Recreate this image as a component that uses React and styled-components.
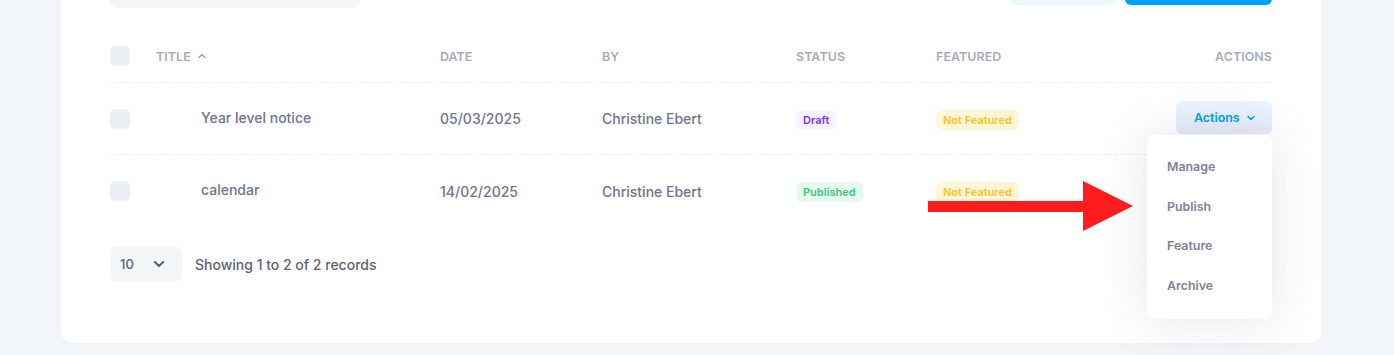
import React from "react"
import styled, { createGlobalStyle } from "styled-components"

const GlobalStyle = createGlobalStyle`
  html, body {
    margin: 0;
    padding: 0;
    background: #f3f6f9;
    font-family: Inter, "Noto Sans", sans-serif;
    overflow: hidden;
  }
`

const rows = [
  {
    title: "Year level notice",
    date: "05/03/2025",
    by: "Christine Ebert",
    status: "draft",
    open: true,
  },
  {
    title: "calendar",
    date: "14/02/2025",
    by: "Christine Ebert",
    status: "published",
  },
]

const badgeColors = {
  draft: { bg: "#f6f2ff", fg: "#7239ea", label: "Draft" },
  published: { bg: "#e6fbf0", fg: "#3fc77c", label: "Published" },
  muted: { bg: "#fff6d8", fg: "#ffc21a", label: "Not Featured" },
}

const ChevronUp = () => (
  <svg width="10" height="10" viewBox="0 0 10 10" fill="none">
    <path d="M2 6.5 L5 3.5 L8 6.5" stroke="#a1a5b7" strokeWidth="1.6" strokeLinecap="round" strokeLinejoin="round" />
  </svg>
)

const ChevronDown = ({ color = "#009ef7", size = 10 }) => (
  <svg width={size} height={size} viewBox="0 0 10 10" fill="none">
    <path d="M2 3.5 L5 6.5 L8 3.5" stroke={color} strokeWidth="1.5" strokeLinecap="round" strokeLinejoin="round" />
  </svg>
)

const Arrow = () => (
  <ArrowSvg width="206" height="52" viewBox="0 0 206 52">
    <polygon points="0,20 155,20 155,0 205,25 155,50 155,31 0,31" fill="#ff1c1c" />
  </ArrowSvg>
)

const App = () => (
  <>
    <GlobalStyle />
    <Page>
      <Card>
        {/* toolbar sits mostly above the visible area */}
        <Toolbar>
          <Search aria-label="Search notices" />
          <ToolbarButtons>
            <LightButton aria-label="Filter" />
            <PrimaryButton aria-label="Add notice" />
          </ToolbarButtons>
        </Toolbar>

        <HeadRow>
          <Checkbox />
          <HeadCell>
            Title <ChevronUp />
          </HeadCell>
          <HeadCell>Date</HeadCell>
          <HeadCell>By</HeadCell>
          <HeadCell>Status</HeadCell>
          <HeadCell>Featured</HeadCell>
          <HeadCell $right>Actions</HeadCell>
        </HeadRow>

        {rows.map((r, i) => (
          <Row key={r.title} $last={i === rows.length - 1}>
            <Checkbox />
            <TitleCell>{r.title}</TitleCell>
            <Cell>{r.date}</Cell>
            <Cell>{r.by}</Cell>
            <div>
              <Badge $kind={r.status}>{badgeColors[r.status].label}</Badge>
            </div>
            <div>
              <Badge $kind="muted">Not Featured</Badge>
            </div>
            <ActionsWrap>
              {r.open && (
                <>
                  <ActionsButton>
                    Actions <ChevronDown />
                  </ActionsButton>
                  <Menu>
                    <MenuItem>Manage</MenuItem>
                    <MenuItem>Publish</MenuItem>
                    <MenuItem>Feature</MenuItem>
                    <MenuItem>Archive</MenuItem>
                  </Menu>
                </>
              )}
            </ActionsWrap>
          </Row>
        ))}

        <Footer>
          <PageSize>
            10 <ChevronDown color="#5e6278" size={14} />
          </PageSize>
          <Showing>Showing 1 to 2 of 2 records</Showing>
        </Footer>

        <Arrow />
      </Card>
    </Page>
  </>
)

export default App

const Page = styled.div`
  padding: 0 73px 12px 61px;
`

const Card = styled.div`
  position: relative;
  margin-top: -66px;
  background: #fff;
  border-radius: 12px;
  padding: 30px 49px 62px;
  box-shadow: 0 0 20px rgba(76, 87, 125, 0.02);
`

const Toolbar = styled.div`
  display: flex;
  align-items: center;
  justify-content: space-between;
  height: 44px;
  margin-bottom: 22px;
`

const Search = styled.input`
  width: 250px;
  height: 44px;
  box-sizing: border-box;
  border: none;
  border-radius: 8px;
  background: #f3f6f9;
  padding: 0 16px;
  font-family: inherit;
`

const ToolbarButtons = styled.div`
  display: flex;
  gap: 10px;
`

const LightButton = styled.button`
  width: 105px;
  height: 38px;
  border: none;
  border-radius: 6px;
  background: #eef7fe;
`

const PrimaryButton = styled(LightButton)`
  width: 147px;
  background: #009ef7;
`

const grid = `
  display: grid;
  grid-template-columns: 46px 284px 162px 194px 140px 1fr auto;
  align-items: center;
  box-sizing: border-box;
`

const HeadRow = styled.div`
  ${grid}
  height: 53px;
  border-bottom: 1px dashed #eceef3;
`

const HeadCell = styled.div`
  display: flex;
  align-items: center;
  gap: 6px;
  justify-content: ${(p) => (p.$right ? "flex-end" : "flex-start")};
  font-size: 12.4px;
  font-weight: 600;
  color: #a9abbd;
  text-transform: uppercase;
  letter-spacing: 0.1px;
`

const Row = styled.div`
  ${grid}
  height: 72px;
  border-bottom: ${(p) => (p.$last ? "none" : "1px dashed #eceef3")};
`

const Checkbox = styled.span`
  display: block;
  width: 20px;
  height: 20px;
  border-radius: 5px;
  background: #eceff3;
`

const Cell = styled.div`
  font-size: 14px;
  font-weight: 500;
  color: #6f7390;
`

const TitleCell = styled(Cell)`
  padding-left: 45px;
  margin-top: -3px;
`

const Badge = styled.span`
  display: inline-block;
  padding: 3px 7px;
  border-radius: 6px;
  font-size: 11px;
  font-weight: 600;
  line-height: 14px;
  background: ${(p) => badgeColors[p.$kind].bg};
  color: ${(p) => badgeColors[p.$kind].fg};
`

const ActionsWrap = styled.div`
  position: relative;
  display: flex;
  justify-content: flex-end;
`

const ActionsButton = styled.button`
  display: flex;
  align-items: center;
  gap: 6px;
  width: 96px;
  height: 33px;
  padding: 0 0 0 18px;
  border: none;
  border-radius: 6px;
  background: linear-gradient(180deg, #ebf6fe 0%, #e3ecf8 100%);
  color: #009ef7;
  font-family: inherit;
  font-size: 12.4px;
  font-weight: 600;
  margin-top: -2px;
`

const Menu = styled.div`
  position: absolute;
  top: 32px;
  right: 0;
  width: 125px;
  padding: 12px 0 14px;
  background: #fff;
  border-radius: 6px;
  box-shadow: 0 0 50px 0 rgba(82, 63, 105, 0.15);
  z-index: 2;
`

const MenuItem = styled.div`
  height: 39.5px;
  display: flex;
  align-items: center;
  padding-left: 20px;
  font-size: 12.4px;
  font-weight: 600;
  color: #7e8299;
`

const Footer = styled.div`
  display: flex;
  align-items: center;
  gap: 13px;
  margin-top: 20px;
`

const PageSize = styled.div`
  display: flex;
  align-items: center;
  justify-content: space-between;
  box-sizing: border-box;
  width: 72px;
  height: 34px;
  padding: 0 16px 0 10px;
  border-radius: 6px;
  background: #f3f6f9;
  font-size: 13px;
  font-weight: 500;
  color: #5e6278;
`

const Showing = styled.span`
  font-size: 14px;
  font-weight: 500;
  color: #5e6278;
`

const ArrowSvg = styled.svg`
  position: absolute;
  left: 867px;
  top: 247px;
  z-index: 3;
`
